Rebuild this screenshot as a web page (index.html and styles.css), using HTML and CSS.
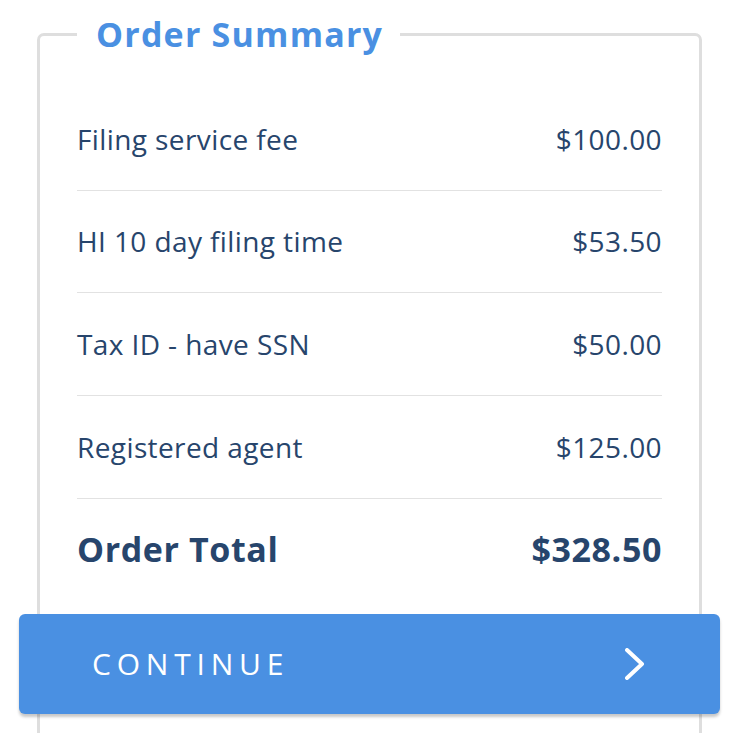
FILE: index.html
```html
<!DOCTYPE html>
<html lang="en">
<head>
<meta charset="utf-8">
<title>Order Summary</title>
<link rel="stylesheet" href="styles.css">
</head>
<body>
<fieldset class="summary">
  <legend class="summary-title">Order Summary</legend>
  <ul class="lines">
    <li class="line"><span class="line-label">Filing service fee</span><span class="line-price">$100.00</span></li>
    <li class="line"><span class="line-label">HI 10 day filing time</span><span class="line-price">$53.50</span></li>
    <li class="line"><span class="line-label">Tax ID - have SSN</span><span class="line-price">$50.00</span></li>
    <li class="line"><span class="line-label">Registered agent</span><span class="line-price">$125.00</span></li>
  </ul>
  <div class="total"><span>Order Total</span><span>$328.50</span></div>
  <button class="continue" type="button">
    <span class="continue-label">CONTINUE</span>
    <svg class="continue-icon" viewBox="0 0 20 32" width="20" height="32" aria-hidden="true"><path d="M2 2 L17 16 L2 30" fill="none" stroke="#fff" stroke-width="4" stroke-linecap="round" stroke-linejoin="round"/></svg>
  </button>
</fieldset>
</body>
</html>
```
FILE: styles.css
```css
* { box-sizing: border-box; }
html, body { margin: 0; padding: 0; background: #fff; }
body {
  font-family: "Open Sans", "Noto Sans", sans-serif;
  color: #27456c;
  width: 731px;
  height: 733px;
  overflow: hidden;
}
.summary {
  margin: 16px 29px 0 37px;
  padding: 36px 37px 60px 37px;
  border: 3px solid #dedede;
  border-radius: 7px;
  min-width: 0;
}
.summary-title {
  padding: 0 17px 0 19px;
  font-size: 34px;
  line-height: 36px;
  font-weight: 700;
  letter-spacing: 1.2px;
  color: #4a90e2;
}
.lines { list-style: none; margin: 0; padding: 0; }
.line {
  display: flex;
  justify-content: space-between;
  align-items: center;
  height: 102.67px;
  border-bottom: 1px solid #e2e2e2;
  font-size: 28px;
  letter-spacing: 0.4px;
}
.total {
  display: flex;
  justify-content: space-between;
  align-items: center;
  height: 101px;
  font-size: 34px;
  font-weight: 700;
  letter-spacing: 0.6px;
}
.continue {
  display: flex;
  justify-content: space-between;
  align-items: center;
  width: calc(100% + 116px);
  margin: 14px -58px 0;
  height: 100px;
  padding: 0 75px 0 73px;
  border: 0;
  border-radius: 6px;
  background: #4a90e2;
  color: #fff;
  box-shadow: 0 3px 3px rgba(0,0,0,0.22);
  font-family: inherit;
  font-size: 30px;
  letter-spacing: 5.8px;
  font-weight: 500;
}
.continue-icon { display: block; }
```
